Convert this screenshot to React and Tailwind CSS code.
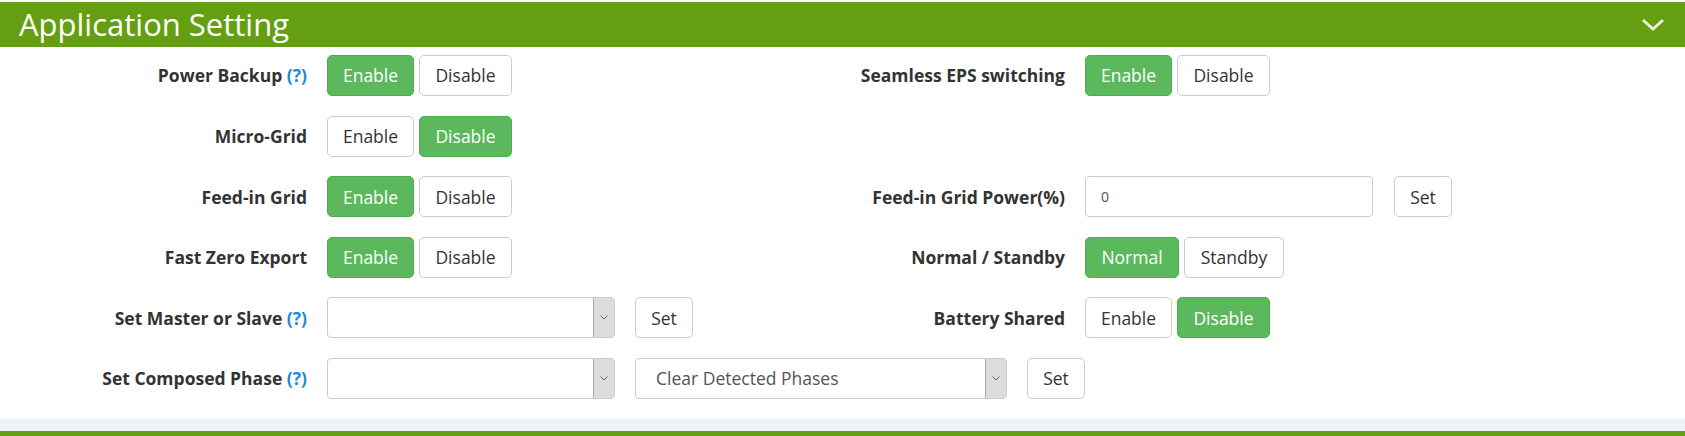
import React from 'react';

const font = { fontFamily: '"Open Sans", "Noto Sans", sans-serif' };

const widths = {
  Enable: 'w-[87px]',
  Disable: 'w-[93px]',
  Normal: 'w-[94px]',
  Standby: 'w-[100px]',
};

const Help = () => <span className="text-[#1f8ad8]">(?)</span>;

const Toggle = ({ options, active }) => (
  <div className="flex gap-[5px]">
    {options.map((o, i) => (
      <button
        key={o}
        className={
          i === active
            ? `${widths[o]} h-[41px] rounded-[5px] border border-[#4cae4c] bg-[#5cb85c] text-white text-[17.5px]`
            : `${widths[o]} h-[41px] rounded-[5px] border border-[#cccccc] bg-white text-[#333] text-[17.5px]`
        }
      >
        {o}
      </button>
    ))}
  </div>
);

const SetButton = () => (
  <button className="h-[41px] w-[58px] rounded-[5px] border border-[#cccccc] bg-white text-[#333] text-[17.5px]">
    Set
  </button>
);

const Select = ({ width, text }) => (
  <div className={`flex h-[41px] ${width} rounded-[4px] border border-[#cccccc] bg-white overflow-hidden`}>
    <div className="flex-1 flex items-center pl-[20px] text-[17.5px] text-[#555]">{text}</div>
    <div className="w-[21px] flex items-center justify-center bg-[#dddddd] border-l border-[#a8a8a8]">
      <svg width="8" height="5" viewBox="0 0 8 5">
        <path d="M0.5 0.5 L4 4 L7.5 0.5" fill="none" stroke="#666" strokeWidth="1" />
      </svg>
    </div>
  </div>
);

const Label = ({ children }) => (
  <div className="w-[307px] text-right font-bold text-[17.5px] text-[#333]">{children}</div>
);

const Half = ({ label, children }) => (
  <div className="w-[758px] flex items-center gap-[20px]">
    {label ? <Label>{label}</Label> : <div className="w-[307px]" />}
    {children}
  </div>
);

export default function App() {
  return (
    <div className="w-[1685px] h-[436px] bg-white overflow-hidden" style={font}>
      <div className="mt-[2px] h-[45px] bg-[#639f10] flex items-center justify-between pl-[19px] pr-[20px]">
        <h1 className="text-white text-[31px] leading-none">Application Setting</h1>
        <svg width="24" height="14" viewBox="0 0 24 14">
          <path d="M2 2 L12 11 L22 2" fill="none" stroke="#e8f0dc" strokeWidth="3" />
        </svg>
      </div>

      <div className="pt-[8px] flex flex-col gap-[19.6px]">
        <div className="flex">
          <Half label={<>Power Backup <Help /></>}>
            <Toggle options={['Enable', 'Disable']} active={0} />
          </Half>
          <Half label="Seamless EPS switching">
            <Toggle options={['Enable', 'Disable']} active={0} />
          </Half>
        </div>
        <div className="flex">
          <Half label="Micro-Grid">
            <Toggle options={['Enable', 'Disable']} active={1} />
          </Half>
        </div>
        <div className="flex">
          <Half label="Feed-in Grid">
            <Toggle options={['Enable', 'Disable']} active={0} />
          </Half>
          <Half label="Feed-in Grid Power(%)">
            <div className="flex items-center gap-[21px]">
              <div className="h-[41px] w-[288px] rounded-[4px] border border-[#cccccc] flex items-center pl-[15px] text-[14px] text-[#555]">
                0
              </div>
              <SetButton />
            </div>
          </Half>
        </div>
        <div className="flex">
          <Half label="Fast Zero Export">
            <Toggle options={['Enable', 'Disable']} active={0} />
          </Half>
          <Half label="Normal / Standby">
            <Toggle options={['Normal', 'Standby']} active={0} />
          </Half>
        </div>
        <div className="flex">
          <Half label={<>Set Master or Slave <Help /></>}>
            <div className="flex items-center gap-[20px]">
              <Select width="w-[288px]" text="" />
              <SetButton />
            </div>
          </Half>
          <Half label="Battery Shared">
            <Toggle options={['Enable', 'Disable']} active={1} />
          </Half>
        </div>
        <div className="flex">
          <div className="flex items-center gap-[20px]">
            <Label>
              Set Composed Phase <Help />
            </Label>
            <Select width="w-[288px]" text="" />
            <Select width="w-[372px]" text="Clear Detected Phases" />
            <SetButton />
          </div>
        </div>
      </div>

      <div className="mt-[20px] h-[12px] bg-[#eef1f5]" />
      <div className="h-[5px] bg-[#639f10]" />
    </div>
  );
}
